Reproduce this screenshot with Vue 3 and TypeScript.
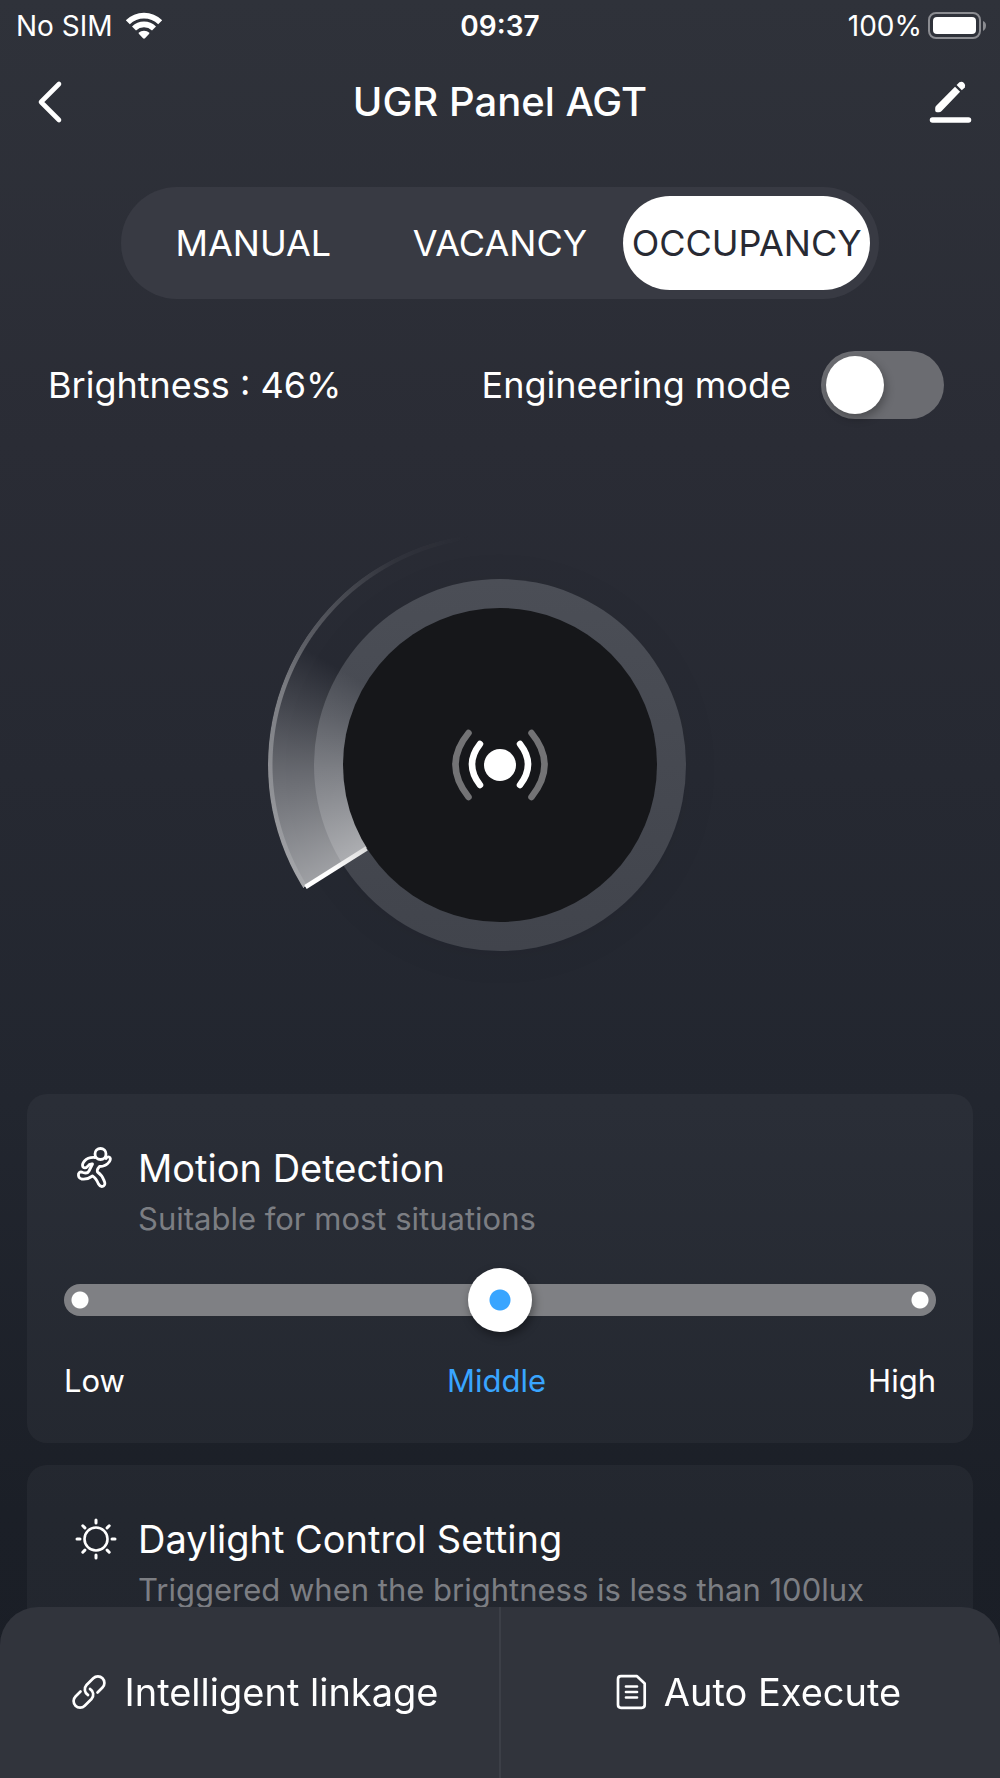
<script setup lang="ts">
import { ref } from 'vue'

type Mode = 'MANUAL' | 'VACANCY' | 'OCCUPANCY'

const modes: Mode[] = ['MANUAL', 'VACANCY', 'OCCUPANCY']
const levels: string[] = ['Low', 'Middle', 'High']

const mode = ref<Mode>('OCCUPANCY')
const brightness = ref<number>(46)
const engineering = ref<boolean>(false)
const sensitivity = ref<number>(1)
const luxLimit = ref<number>(100)
</script>

<template>
  <div class="app">
    <div class="status">
      <div class="status-side">
        <span>No SIM</span>
        <svg class="wifi" viewBox="0 0 38 28" aria-hidden="true">
          <path d="M0.8 8.3A26 26 0 0 1 37.2 8.3L33.2 12.2A20.5 20.5 0 0 0 4.8 12.2Z" />
          <path d="M7 14.500A17.200 17.200 0 0 1 31 14.500L27 18.400A11.800 11.800 0 0 0 11 18.400Z" />
          <path d="M13.600 20.800A8 8 0 0 1 24.400 20.800Q24.600 21.400 24 22L20 26.300Q19 27.200 18 26.300L14 22Q13.400 21.400 13.600 20.800Z" />
        </svg>
      </div>
      <strong class="clock">09:37</strong>
      <div class="status-side status-end">
        <span>100%</span>
        <svg class="battery" viewBox="0 0 60 28" aria-hidden="true">
          <rect x="1" y="1" width="51" height="25" rx="7" fill="none" stroke="#8b8c91" stroke-width="2" />
          <rect x="5" y="5" width="43" height="17" rx="4" fill="#fff" />
          <path d="M55 9Q58 10 58 13.500Q58 17 55 19Z" fill="#8b8c91" />
        </svg>
      </div>
    </div>

    <header class="header">
      <button class="icon-button" type="button" aria-label="Back">
        <svg viewBox="0 0 44 44" aria-hidden="true">
          <path d="M31 4L13 22L31 40" fill="none" stroke="#fff" stroke-width="4.600" stroke-linecap="round" stroke-linejoin="round" />
        </svg>
      </button>
      <h1>UGR Panel AGT</h1>
      <button class="icon-button" type="button" aria-label="Edit">
        <svg viewBox="0 0 44 44" aria-hidden="true">
          <path d="M4.500 40H40.500" stroke="#fff" stroke-width="5.500" stroke-linecap="round" />
          <path d="M27 6.700L32.100 11.800L13.400 31.200Q12.400 32.200 10.900 32.200H8.900Q7.200 32.200 7.200 30.500V28Q7.200 26.700 8.200 25.700Z" fill="#fff" />
          <path d="M28.600 5.100L31.400 2.200A4 4 0 0 1 36.800 7.500L33.800 10.300Z" fill="#fff" />
        </svg>
      </button>
    </header>

    <main>
      <div class="tabs" role="tablist">
        <button
          v-for="item in modes"
          :key="item"
          type="button"
          role="tab"
          class="tab"
          :class="{ active: item === mode }"
          :aria-selected="item === mode"
          @click="mode = item"
        >{{ item }}</button>
      </div>

      <div class="info">
        <span>Brightness : {{ brightness }}%</span>
        <label class="engineering">
          <span>Engineering mode</span>
          <input v-model="engineering" class="switch" type="checkbox" role="switch" />
        </label>
      </div>

      <div class="dial">
        <div class="ring"></div>
        <div class="sweep"></div>
        <div class="rim"></div>
        <div class="hub"></div>
        <svg class="dial-art" viewBox="0 0 464 464" aria-hidden="true">
          <defs>
            <linearGradient id="hand" x1="0" y1="1" x2="1" y2="0">
              <stop offset="0.4" stop-color="#fff" />
              <stop offset="1" stop-color="#dcdcdc" />
            </linearGradient>
          </defs>
          <path d="M37.500 354L98.500 315.500" stroke="url(#hand)" stroke-width="4.500" />
          <circle cx="232" cy="232" r="16" fill="#fff" />
          <g fill="none" stroke="#fff" stroke-width="6.500" stroke-linecap="round">
            <path d="M212 211Q196 231.500 212 252M252 211Q268 231.500 252 252" />
            <path opacity="0.4" d="M200.500 200Q174.500 231.500 200.500 264M263.500 200Q289.500 231.500 263.500 264" />
          </g>
        </svg>
      </div>

      <section class="card">
        <div class="card-head">
          <svg class="card-icon" viewBox="0 0 62 48" aria-hidden="true">
            <g fill="none" stroke="#fff" stroke-width="2.800" stroke-linejoin="round" stroke-linecap="round">
              <circle cx="36.500" cy="10" r="5.500" />
              <path d="M31 13.500Q24 13 20.500 17Q17.500 20.500 19 23Q21 25 23.500 22.500Q25.500 19.500 28.500 20L25 27Q23.500 30 19 28.500Q15.500 27 14.500 30Q14 34 17.500 35Q23 36 28.500 32Q32 34 34.500 40Q36.500 43.500 39.500 42Q42 40.500 40 36.500Q38 31 33.500 28Q32.500 26 35.500 22.500Q42 22.500 45.500 17.500Q47.500 14 45 13Q43 12.500 42 14.500" />
            </g>
          </svg>
          <h2>Motion Detection</h2>
          <p>Suitable for most situations</p>
        </div>
        <input v-model.number="sensitivity" class="slider" type="range" min="0" max="2" step="1" aria-label="Motion Detection" />
        <div class="levels">
          <span v-for="(level, i) in levels" :key="level" :class="{ chosen: i === sensitivity }">{{ level }}</span>
        </div>
      </section>

      <section class="card">
        <div class="card-head">
          <svg class="card-icon" viewBox="0 0 62 48" aria-hidden="true">
            <g fill="none" stroke="#fff" stroke-width="2.600" stroke-linecap="round">
              <circle cx="32" cy="24" r="11.500" />
              <path d="M32 5V8M32 40V43M13 24H16M48 24H51M18.800 10.800L20.900 12.900M43.100 35.100L45.200 37.200M18.800 37.200L20.900 35.100M43.100 12.900L45.200 10.800" stroke-width="3" />
            </g>
          </svg>
          <h2>Daylight Control Setting</h2>
          <p>Triggered when the brightness is less than {{ luxLimit }}lux</p>
        </div>
      </section>
    </main>

    <nav class="bottom">
      <button type="button">
        <svg viewBox="0 0 58 48" aria-hidden="true">
          <g fill="none" stroke="#fff" stroke-width="2.700" stroke-linecap="round">
            <path d="M37.500 24.500L42.500 19.500A6.500 6.500 0 0 0 33.300 10.300L26.500 17A6.500 6.500 0 0 0 28 27" />
            <path d="M20.500 23.500L15.500 28.500A6.500 6.500 0 0 0 24.700 37.700L31.500 31A6.500 6.500 0 0 0 30 21" />
          </g>
        </svg>
        <span>Intelligent linkage</span>
      </button>
      <button type="button">
        <svg viewBox="0 0 58 48" aria-hidden="true">
          <g fill="none" stroke="#fff" stroke-width="2.700" stroke-linecap="round" stroke-linejoin="round">
            <path d="M21 8.200H37L44.700 15.500V36.800Q44.700 39.800 41.700 39.800H21Q18 39.800 18 36.800V11.200Q18 8.200 21 8.200Z" />
            <path d="M26 18.500H37M26 24H37M26 29.500H37" />
          </g>
        </svg>
        <span>Auto Execute</span>
      </button>
    </nav>
  </div>
</template>

<style>
body {
  margin: 0;
  background: #1a1e26;
}
</style>

<style scoped>
.app {
  box-sizing: border-box;
  min-height: 100vh;
  padding-bottom: 100px;
  background: linear-gradient(180deg, #2f323a 0%, #2a2c35 25%, #22262f 62%, #1b1f27 85%, #1a1e26 100%);
  color: #fff;
  font-family: Inter, "Liberation Sans", sans-serif;
  font-size: 36px;
}

button {
  padding: 0;
  border: 0;
  background: none;
  color: inherit;
  font: inherit;
  cursor: pointer;
}

svg {
  display: block;
}

.status {
  display: grid;
  grid-template-columns: 1fr auto 1fr;
  align-items: center;
  height: 51px;
  padding: 0 12px;
  font-size: 28px;
}

.status-side {
  display: flex;
  align-items: center;
  gap: 12px;
  padding-left: 4px;
}

.status-end {
  justify-content: flex-end;
  gap: 6px;
  padding-left: 0;
}

.clock {
  font-weight: 600;
}

.wifi {
  width: 38px;
  height: 28px;
  fill: #fff;
}

.battery {
  width: 60px;
  height: 28px;
}

.header {
  display: flex;
  align-items: center;
  justify-content: space-between;
  height: 101px;
  padding: 0 28px;
}

.icon-button svg {
  width: 44px;
  height: 44px;
}

h1 {
  margin: 0;
  font-size: 40px;
  font-weight: 500;
}

.tabs {
  display: flex;
  margin: 35px 121px 0;
  padding: 9px;
  border-radius: 56px;
  background: #383a43;
}

.tab {
  flex: 1 1 0;
  min-width: 0;
  height: 94px;
  border-radius: 47px;
}

.tab.active {
  background: #fff;
  color: #282a33;
}

.info {
  display: flex;
  align-items: center;
  justify-content: space-between;
  margin-top: 52px;
  padding: 0 56px 0 48px;
}

.engineering {
  display: flex;
  align-items: center;
  gap: 30px;
}

.switch {
  appearance: none;
  width: 123px;
  height: 68px;
  margin: 0;
  padding: 5px;
  border-radius: 34px;
  background: #6b6c71;
}

.switch::before {
  content: "";
  display: block;
  width: 58px;
  height: 58px;
  border-radius: 50%;
  background: #fff;
  box-shadow: 2px 4px 10px rgba(0, 0, 0, 0.3);
}

.switch:checked::before {
  margin-left: auto;
}

.dial {
  display: grid;
  place-items: center;
  width: 464px;
  height: 464px;
  margin: 114px auto 97px;
}

.dial > * {
  grid-area: 1 / 1;
}

.ring {
  width: 372px;
  height: 372px;
  border-radius: 50%;
  background: linear-gradient(180deg, #4b4e56, #41444c);
  box-shadow: 0 4px 40px rgba(0, 0, 0, 0.06);
}

.sweep,
.rim {
  width: 464px;
  height: 464px;
  border-radius: 50%;
}

.sweep {
  background: conic-gradient(from 238deg, rgba(255, 255, 255, 0.56) 0deg, rgba(255, 255, 255, 0.3) 30deg, rgba(255, 255, 255, 0.13) 48deg, rgba(255, 255, 255, 0) 63deg);
}

.rim {
  background: conic-gradient(from 238deg, rgba(255, 255, 255, 0.1) 0deg, rgba(255, 255, 255, 0.26) 32deg, rgba(255, 255, 255, 0.32) 52deg, rgba(255, 255, 255, 0.22) 68deg, rgba(255, 255, 255, 0.04) 95deg, rgba(255, 255, 255, 0) 115deg);
  mask: radial-gradient(circle, transparent 227px, #000 228px);
}

.hub {
  width: 314px;
  height: 314px;
  border-radius: 50%;
  background: #16171a;
}

.dial-art {
  width: 464px;
  height: 464px;
}

.card {
  margin: 0 27px 22px;
  padding: 50px 37px 44px;
  border-radius: 20px;
  background: rgba(255, 255, 255, 0.04);
}

.card-head {
  display: grid;
  grid-template-columns: 62px 1fr;
  column-gap: 12px;
  row-gap: 9px;
}

.card-icon {
  width: 62px;
  height: 48px;
}

h2 {
  margin: 0;
  font-size: 38px;
  font-weight: 400;
  line-height: 48px;
}

.card-head p {
  grid-column: 2;
  margin: 0;
  color: #7c7e83;
  font-size: 31px;
  line-height: 36px;
}

.slider {
  appearance: none;
  display: block;
  width: 100%;
  height: 64px;
  margin: 31px 0;
  background: none;
}

.slider::-webkit-slider-runnable-track {
  height: 32px;
  border-radius: 16px;
  background:
    radial-gradient(circle at 16px 16px, #fff 8px, transparent 9px),
    radial-gradient(circle at calc(100% - 16px) 16px, #fff 8px, transparent 9px),
    #7f8084;
}

.slider::-webkit-slider-thumb {
  appearance: none;
  width: 64px;
  height: 64px;
  margin-top: -16px;
  border-radius: 50%;
  background: radial-gradient(circle, #39a5ff 10px, #fff 11px);
  box-shadow: 2px 4px 10px rgba(0, 0, 0, 0.4);
}

.levels {
  display: flex;
  justify-content: space-between;
  font-size: 31px;
  line-height: 36px;
}

.chosen {
  color: #39a5ff;
}

.bottom {
  position: fixed;
  right: 0;
  bottom: 0;
  left: 0;
  display: flex;
  height: 171px;
  border-radius: 38px 38px 0 0;
  background: #31343c;
  font-size: 38px;
}

.bottom button {
  display: flex;
  flex: 1 1 0;
  align-items: center;
  justify-content: center;
  gap: 6px;
  padding-bottom: 2px;
}

.bottom button + button {
  border-left: 2px solid #3c3f47;
}

.bottom svg {
  width: 58px;
  height: 48px;
}
</style>
